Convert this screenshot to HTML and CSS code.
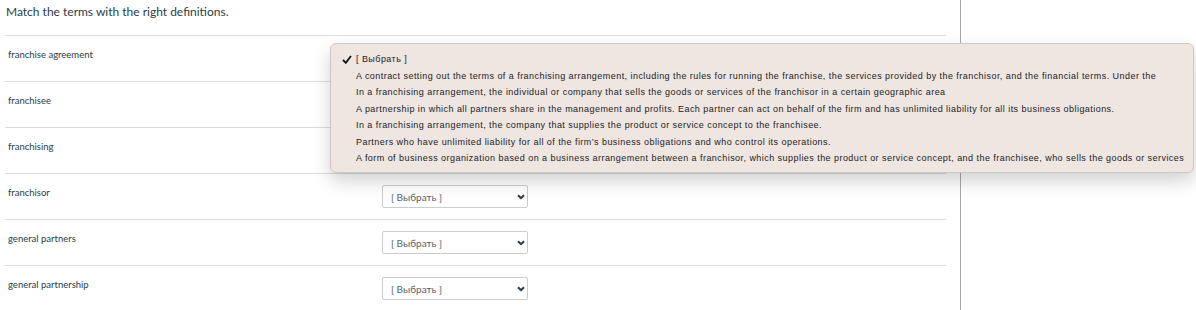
FILE: index.html
```html
<!DOCTYPE html>
<html lang="en">
<head>
    <meta charset="UTF-8">
    <title>Matching Question</title>
    <link rel="stylesheet" href="styles.css">
</head>
<body>

    <div class="page">
        <!-- Question -->
        <div class="question">
            <p class="question-text">Match the terms with the right definitions.</p>

            <div class="answers">
                <!-- the first three selects are covered by the open menu -->
                <div class="answer-row">
                    <div class="term">franchise agreement</div>
                    <div class="select-box covered"><span>[ Выбрать ]</span><svg class="chevron" viewBox="0 0 8 6"><path d="M1 1.2 L4 4.2 L7 1.2"/></svg></div>
                </div>
                <div class="answer-row">
                    <div class="term">franchisee</div>
                    <div class="select-box covered"><span>[ Выбрать ]</span><svg class="chevron" viewBox="0 0 8 6"><path d="M1 1.2 L4 4.2 L7 1.2"/></svg></div>
                </div>
                <div class="answer-row">
                    <div class="term">franchising</div>
                    <div class="select-box covered"><span>[ Выбрать ]</span><svg class="chevron" viewBox="0 0 8 6"><path d="M1 1.2 L4 4.2 L7 1.2"/></svg></div>
                </div>
                <div class="answer-row">
                    <div class="term">franchisor</div>
                    <div class="select-box"><span>[ Выбрать ]</span><svg class="chevron" viewBox="0 0 8 6"><path d="M1 1.2 L4 4.2 L7 1.2"/></svg></div>
                </div>
                <div class="answer-row">
                    <div class="term">general partners</div>
                    <div class="select-box"><span>[ Выбрать ]</span><svg class="chevron" viewBox="0 0 8 6"><path d="M1 1.2 L4 4.2 L7 1.2"/></svg></div>
                </div>
                <div class="answer-row">
                    <div class="term">general partnership</div>
                    <div class="select-box"><span>[ Выбрать ]</span><svg class="chevron" viewBox="0 0 8 6"><path d="M1 1.2 L4 4.2 L7 1.2"/></svg></div>
                </div>
            </div>
        </div>

        <div class="sidebar"></div>
    </div>

    <!-- Open dropdown menu -->
    <ul class="dropdown">
        <li class="selected"><svg class="check" viewBox="0 0 10 9"><path d="M1 5 L3.8 7.8 L9 1"/></svg>[ Выбрать ]</li>
        <li>A contract setting out the terms of a franchising arrangement, including the rules for running the franchise, the services provided by the franchisor, and the financial terms. Under the</li>
        <li>In a franchising arrangement, the individual or company that sells the goods or services of the franchisor in a certain geographic area</li>
        <li>A partnership in which all partners share in the management and profits. Each partner can act on behalf of the firm and has unlimited liability for all its business obligations.</li>
        <li>In a franchising arrangement, the company that supplies the product or service concept to the franchisee.</li>
        <li>Partners who have unlimited liability for all of the firm’s business obligations and who control its operations.</li>
        <li>A form of business organization based on a business arrangement between a franchisor, which supplies the product or service concept, and the franchisee, who sells the goods or services</li>
    </ul>

</body>
</html>
```

FILE: styles.css
```css
body {
    margin: 0;
    background-color: white;
    font-family: Lato, "Liberation Sans", sans-serif;
    color: #2d3b45;
}
.page {
    display: flex;
    height: 310px;
}
.question {
    width: 960px;
    border-right: 1px solid #a8a8a8;
}
.question-text {
    margin: 0;
    padding: 4px 0 0 6px;
    font-size: 12px;
    line-height: 15px;
    height: 18px;
}
.answers {
    margin: 13px 0 0 5px;
    width: 941px;
}
.answer-row {
    display: flex;
    height: 46px;
    box-sizing: border-box;
    border-top: 1px solid #dcdcdc;
    padding-top: 11px;
}
.term {
    width: 374px;
    padding-left: 3px;
    padding-top: 2px;
    font-size: 9.5px;
    line-height: 12px;
}
.select-box {
    width: 146px;
    height: 23px;
    box-sizing: border-box;
    border: 1px solid #c7cdd1;
    border-radius: 2px;
    display: flex;
    align-items: center;
    justify-content: space-between;
    padding: 0 2px 0 8px;
    font-size: 10px;
    color: #5b6268;
}
.select-box.covered {
    visibility: hidden;
}
.chevron {
    width: 8px;
    height: 6px;
    fill: none;
    stroke: #2d3b45;
    stroke-width: 2;
}
.dropdown {
    position: absolute;
    left: 330px;
    top: 43px;
    width: 864px;
    height: 130px;
    box-sizing: border-box;
    margin: 0;
    padding: 7px 0 0 25px;
    list-style: none;
    background-color: #efe6e2;
    border: 1px solid #cfc8c4;
    border-radius: 6px;
    box-shadow: 0 8px 18px rgba(0, 0, 0, 0.18);
    font-family: "Liberation Sans", Arial, sans-serif;
    font-size: 9px;
    letter-spacing: 0.45px;
    line-height: 16.5px;
    color: #222;
    white-space: nowrap;
    overflow: hidden;
}
.dropdown li.selected {
    position: relative;
}
.check {
    position: absolute;
    left: -14px;
    top: 4px;
    width: 10px;
    height: 9px;
    fill: none;
    stroke: #111;
    stroke-width: 1.8;
}
```
